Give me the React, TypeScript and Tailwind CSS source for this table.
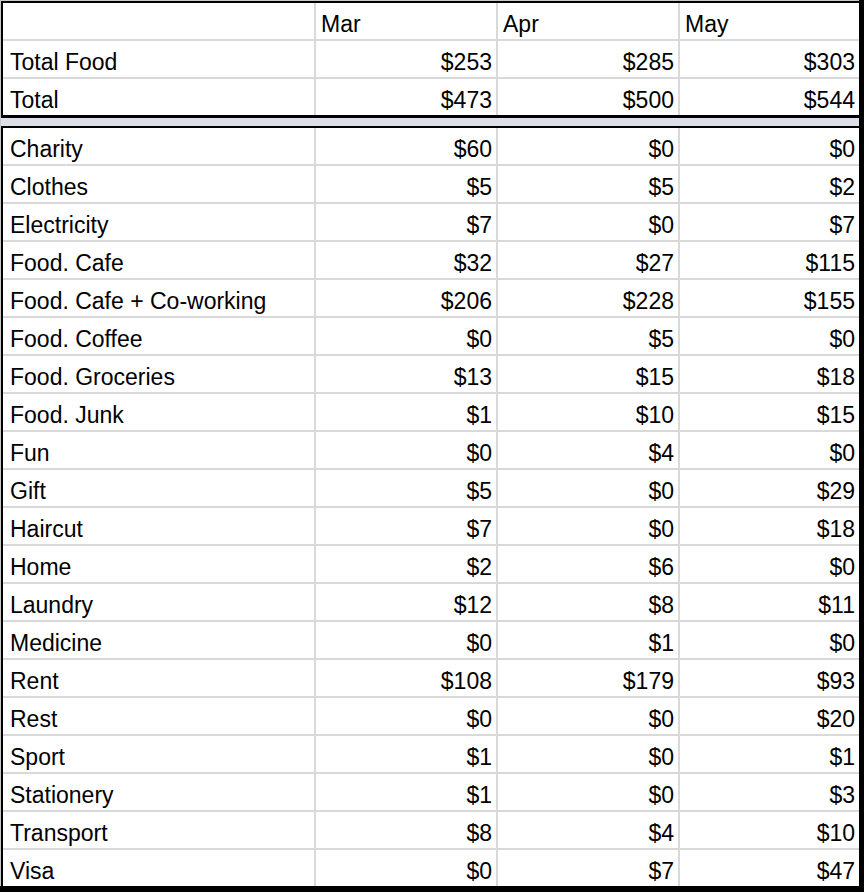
import React from "react";

const header = ["", "Mar", "Apr", "May"];
const top: [string, string, string, string][] = [
  ["Total Food", "$253", "$285", "$303"],
  ["Total", "$473", "$500", "$544"],
];
const rows: [string, string, string, string][] = [
  ["Charity", "$60", "$0", "$0"],
  ["Clothes", "$5", "$5", "$2"],
  ["Electricity", "$7", "$0", "$7"],
  ["Food. Cafe", "$32", "$27", "$115"],
  ["Food. Cafe + Co-working", "$206", "$228", "$155"],
  ["Food. Coffee", "$0", "$5", "$0"],
  ["Food. Groceries", "$13", "$15", "$18"],
  ["Food. Junk", "$1", "$10", "$15"],
  ["Fun", "$0", "$4", "$0"],
  ["Gift", "$5", "$0", "$29"],
  ["Haircut", "$7", "$0", "$18"],
  ["Home", "$2", "$6", "$0"],
  ["Laundry", "$12", "$8", "$11"],
  ["Medicine", "$0", "$1", "$0"],
  ["Rent", "$108", "$179", "$93"],
  ["Rest", "$0", "$0", "$20"],
  ["Sport", "$1", "$0", "$1"],
  ["Stationery", "$1", "$0", "$3"],
  ["Transport", "$8", "$4", "$10"],
  ["Visa", "$0", "$7", "$47"],
];

function Row({ cells, head }: { cells: string[]; head?: boolean }) {
  return (
    <>
      {cells.map((c, i) => (
        <div
          key={i}
          className={
            "bg-white h-[36px] pt-[6px] leading-[30px] whitespace-nowrap overflow-hidden " +
            (i === 0 ? "pl-[7px]" : head ? "pl-[5px]" : "pr-[4px] text-right")
          }
        >
          {c}
        </div>
      ))}
    </>
  );
}

export default function App() {
  return (
    <div
      className="w-[864px] h-[892px] bg-black pr-[5px] pb-[6px] text-black text-[23px]"
      style={{ fontFamily: '"Liberation Sans", Arial, sans-serif' }}
    >
      <div className="w-full h-full bg-[#c8c8c8] pl-[1px] pt-[1px] flex flex-col">
        <div className="border-l-2 border-t-2 border-b-[3px] border-black">
          <div className="grid grid-cols-[311px_180px_180px_179px] gap-[2px] bg-[#d9d9d9]">
            <Row cells={header} head />
            {top.map((r, i) => (
              <Row key={i} cells={r} />
            ))}
          </div>
        </div>
        <div className="h-[8px] bg-[#dbe0e8]" />
        <div className="flex-1 border-l-2 border-t-2 border-black bg-white">
          <div className="grid grid-cols-[311px_180px_180px_179px] gap-[2px] bg-[#d9d9d9]">
            {rows.map((r, i) => (
              <Row key={i} cells={r} />
            ))}
          </div>
        </div>
      </div>
    </div>
  );
}
